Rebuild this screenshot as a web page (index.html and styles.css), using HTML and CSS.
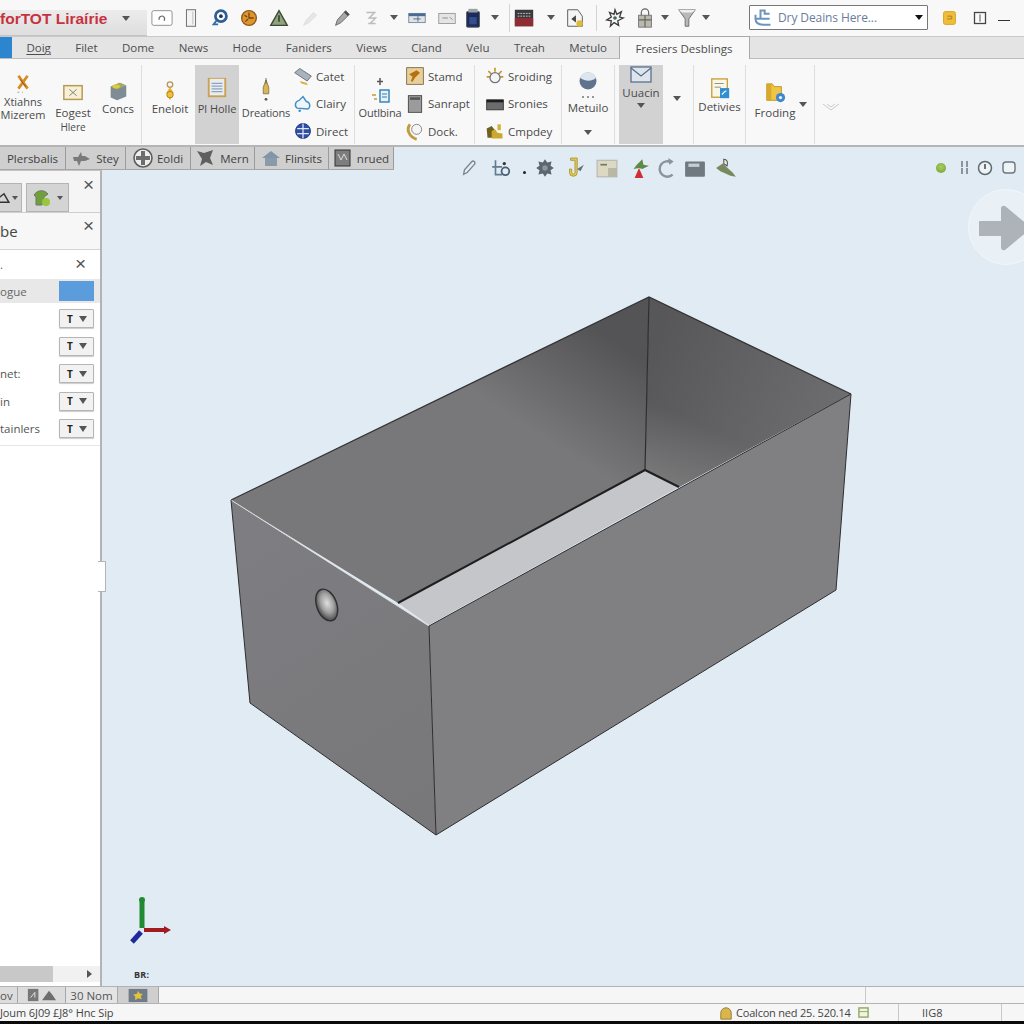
FILE: index.html
```html
<!DOCTYPE html>
<html lang="en">
<head>
<meta charset="utf-8">
<title>forTOT Liraírie</title>
<link rel="stylesheet" href="styles.css">
</head>
<body>
<header class="topbar">
  <div class="title"><span class="title-text">forTOT Liraírie</span><i class="tri tri-title"></i></div>
  <div class="slot w30"><svg class="i" viewBox="0 0 24 24"><rect x="1" y="4" width="22" height="16" rx="2" fill="#fff" stroke="#8a8a8a"/><path d="M9 14a3 3 0 1 1 5 1" fill="none" stroke="#666" stroke-width="1.2"/></svg></div>
  <div class="slot w28"><svg class="i" viewBox="0 0 24 24"><rect x="7" y="3" width="10" height="18" fill="#f4f4f4" stroke="#666"/><path d="M14 5v14" stroke="#bbb"/></svg></div>
  <div class="slot w30"><svg class="i" viewBox="0 0 24 24"><circle cx="13" cy="10" r="6" fill="none" stroke="#2f5d94" stroke-width="3"/><circle cx="13" cy="10" r="2" fill="#16385f"/><path d="M8 15l-3 4h5" fill="none" stroke="#2f6ea8" stroke-width="2"/></svg></div>
  <div class="slot w28"><svg class="i" viewBox="0 0 24 24"><circle cx="12" cy="12" r="8" fill="#e0952c" stroke="#8b5a1c" stroke-width="1.5"/><path d="M12 6v6h5M7 9l3 2M8 16l3-3" stroke="#6d4416" stroke-width="1.4" fill="none"/></svg></div>
  <div class="slot w32"><svg class="i" viewBox="0 0 24 24"><path d="M12 4l9 16H3z" fill="#8fa37c" stroke="#3c4a34" stroke-width="1.5"/><path d="M12 9v7" stroke="#2e3a28" stroke-width="1.6"/></svg></div>
  <div class="slot w30"><svg class="i" viewBox="0 0 24 24"><path d="M5 20l3-6 8-8 3 3-8 8z" fill="#e6e6e6" stroke="#ddd"/></svg></div>
  <div class="slot w34"><svg class="i" viewBox="0 0 24 24"><path d="M5 20l2-6 9-10 4 4-9 9z" fill="#a8a8a8" stroke="#666"/><path d="M15 5l4 4" stroke="#444" stroke-width="2"/></svg></div>
  <div class="slot w24"><svg class="i" viewBox="0 0 24 24"><path d="M7 6h9l-6 6h7l-6 6M9 18h8" fill="none" stroke="#bcbcbc" stroke-width="1.6"/></svg></div>
  <div class="slot w22"><i class="tri"></i></div>
  <div class="slot w24"><svg class="i" viewBox="0 0 24 24"><rect x="3" y="7" width="18" height="10" fill="#dfe3e8" stroke="#7a8796"/><rect x="3" y="7" width="18" height="3" fill="#4a6c92"/><path d="M13 10v6M8 13h8" stroke="#4d6a88"/></svg></div>
  <div class="slot w36"><svg class="i" viewBox="0 0 24 24"><rect x="3" y="7" width="18" height="11" fill="#e4e4e4" stroke="#999"/><path d="M7 12h6M15 11l3 3" stroke="#888"/></svg></div>
  <div class="slot w16"><svg class="i" viewBox="0 0 24 24"><rect x="5" y="5" width="14" height="17" rx="1" fill="#1b2a5a" stroke="#555"/><rect x="7" y="2" width="10" height="4" fill="#9aa0a8"/><rect x="8" y="11" width="8" height="8" fill="#33508c"/></svg></div>
  <div class="slot w28"><i class="tri"></i></div>
  <div class="slot w28 sep-left"><svg class="i" viewBox="0 0 24 24"><rect x="2" y="3" width="20" height="18" fill="#3a3a3e"/><rect x="2" y="12" width="20" height="9" fill="#8e2c33"/><path d="M5 7h14M5 10h14" stroke="#ccc" stroke-dasharray="2 1"/></svg></div>
  <div class="slot w28"><i class="tri"></i></div>
  <div class="slot w20"><svg class="i" viewBox="0 0 24 24"><path d="M4 3h11l5 7v11H4z" fill="#f5f5f5" stroke="#555"/><path d="M8 13l5-4v8z" fill="#444"/><circle cx="17" cy="18" r="3.5" fill="#e0b93a"/></svg></div>
  <div class="slot w22"><span class="bar-sep"></span></div>
  <div class="slot w16"><svg class="i" viewBox="0 0 24 24"><path d="M12 3l2 5 5-3-2 6 4 1-6 3 1 5-5-3-4 4 1-6-5-1 5-3-2-5 5 2z" fill="#f4f4f4" stroke="#3b3b3b" stroke-width="1.4"/><circle cx="12" cy="12" r="2" fill="#3a6c50"/></svg></div>
  <div class="slot w32 gap6"><svg class="i" viewBox="0 0 24 24"><rect x="5" y="9" width="14" height="13" fill="#b9b9ad" stroke="#777"/><path d="M8 9V6a4 4 0 0 1 8 0v3M12 9v13M5 14h14" fill="none" stroke="#666" stroke-width="1.3"/></svg></div>
  <div class="slot w8"><i class="tri"></i></div>
  <div class="slot w30 gap3"><svg class="i" viewBox="0 0 24 24"><path d="M3 3h18l-7 10v8h-4v-8z" fill="#b8b8b4" stroke="#6b6b6b"/><path d="M3 3h18l-3 3H6z" fill="#eee"/></svg></div>
  <div class="slot w8"><i class="tri"></i></div>
  <div class="search">
    <svg class="search-icon" viewBox="0 0 24 24"><path d="M3 8v5h6V3h5v4h6M3 13c0 5 4 7 9 7h9M9 13h11" fill="none" stroke="#6f94bc" stroke-width="2.4"/></svg>
    <span class="search-text">Dry Deains Here...</span>
    <i class="tri tri-black"></i>
  </div>
  <div class="slot w42"><svg class="i" viewBox="0 0 24 24"><rect x="6" y="5" width="13" height="14" rx="2" fill="#eebd3c" stroke="#d9a21e"/><path d="M10 10h5v3h-5" fill="none" stroke="#a8781a"/></svg></div>
  <div class="slot w19"><svg class="i" viewBox="0 0 24 24"><rect x="6" y="6" width="12" height="12" fill="#fafafa" stroke="#444" stroke-width="1.4"/><path d="M12 8v8" stroke="#444"/></svg></div>
  <div class="slot w35"><span class="minimise"></span></div>
</header>

<nav class="menu">
  <span class="menu-app"></span>
  <span class="menu-item first">Doig</span>
  <span class="menu-item">Filet</span>
  <span class="menu-item">Dome</span>
  <span class="menu-item">News</span>
  <span class="menu-item">Hode</span>
  <span class="menu-item">Faniders</span>
  <span class="menu-item">Views</span>
  <span class="menu-item">Cland</span>
  <span class="menu-item">Velu</span>
  <span class="menu-item">Treah</span>
  <span class="menu-item">Metulo</span>
  <span class="menu-item active">Fresiers Desblings</span>
</nav>

<section class="ribbon">
  <div class="group g1">
    <div class="rb rb-xt"><svg class="ri" viewBox="0 0 24 24"><path d="M7 3l10 14M17 3L7 17" stroke="#d98b22" stroke-width="3"/><path d="M9 7l6 8" stroke="#7a5520" stroke-width="1"/><path d="M6 21h2M11 21h1" stroke="#999"/></svg><span>Xtiahns<br>Mizerem</span></div>
    <div class="rb rb-eo"><svg class="ri" viewBox="0 0 24 24"><rect x="2" y="4" width="20" height="15" fill="#f7f0d4" stroke="#b59a55" stroke-width="1.6"/><path d="M8 8l8 7M16 8l-8 7" stroke="#777"/></svg><span>Eogest<br><small>Hlere</small></span></div>
    <div class="rb rb-co"><svg class="ri" viewBox="0 0 24 24"><path d="M4 7l10-4 7 3v12l-10 4-7-3z" fill="#7f8c96"/><path d="M4 7l10-4 7 3-10 4z" fill="#a7aa62"/><ellipse cx="10" cy="7" rx="4" ry="2.2" fill="#d8cf38"/></svg><span>Concs</span></div>
  </div>
  <div class="group g2">
    <div class="rb rb-en"><svg class="ri" viewBox="0 0 24 24"><circle cx="12" cy="5" r="3" fill="none" stroke="#b79554" stroke-width="1.4"/><path d="M12 8l-4 6 4 8 4-8z" fill="#e6ae2e"/><circle cx="12" cy="16" r="3.5" fill="#f0c23f" stroke="#b07d15"/></svg><span>Eneloit</span></div>
    <div class="rb rb-pl"><svg class="ri" viewBox="0 0 24 24"><rect x="2" y="1" width="20" height="21" fill="#c9a24e"/><rect x="4" y="2" width="16" height="18" fill="#e9edf2"/><path d="M6 7h12M6 10h12M6 13h12M6 16h12" stroke="#8ea4bd" stroke-width="1.4"/></svg><span>Pl Holle</span></div>
    <div class="rb rb-dr"><svg class="ri-tall" viewBox="0 0 24 30"><path d="M12 3l3 8v7H9v-7z" fill="#d8b45a" stroke="#8a7a48"/><path d="M12 1v6" stroke="#555"/><circle cx="12" cy="24" r="1.5" fill="#555"/></svg><span>Dreations</span></div>
    <div class="col">
      <div class="row"><svg class="si" viewBox="0 0 24 24"><path d="M2 8l6-5 14 9-5 6z" fill="#aab2bc" stroke="#5b6672"/><path d="M8 18l8 2 2 3-8-2z" fill="#d8b23c"/></svg><span>Catet</span></div>
      <div class="row"><svg class="si" viewBox="0 0 24 24"><path d="M5 17a5 5 0 0 1 2-9l5-5 4 6a5 5 0 0 1 2 9z" fill="#eef6fb" stroke="#3f8fc2" stroke-width="1.7"/><circle cx="8" cy="20" r="1.5" fill="#3f8fc2"/></svg><span>Clairy</span></div>
      <div class="row"><svg class="si" viewBox="0 0 24 24"><circle cx="12" cy="12" r="9" fill="#2f4fa6" stroke="#1d2f73"/><path d="M5 9h14M5 15h14M12 3v18" stroke="#dfe8fa" stroke-width="1.5"/></svg><span>Direct</span></div>
    </div>
  </div>
  <div class="group g3">
    <div class="rb rb-ou"><svg class="ri-ou" viewBox="0 0 24 32"><path d="M12 4v7M9 7.500h6" stroke="#555" stroke-width="1.500"/><rect x="12" y="16" width="9" height="12" fill="#e7f1f8" stroke="#2c7fb8" stroke-width="1.400"/><path d="M14 20h5M14 23h5" stroke="#2c7fb8"/><path d="M4 21h4M6 25h3" stroke="#c59a3b" stroke-width="1.600"/></svg><span>Outlbina</span></div>
    <div class="col">
      <div class="row"><svg class="si" viewBox="0 0 24 24"><rect x="2" y="2" width="20" height="20" fill="#e6cf9a" stroke="#77603a"/><path d="M5 10l9-5 4 3-6 6-3 5-2-1 2-5z" fill="#b8700f"/></svg><span>Stamd</span></div>
      <div class="row"><svg class="si" viewBox="0 0 24 24"><rect x="4" y="2" width="16" height="20" fill="#9b9b9b" stroke="#3d3d3d"/><rect x="6" y="4" width="12" height="3" fill="#555"/></svg><span>Sanrapt</span></div>
      <div class="row"><svg class="si" viewBox="0 0 24 24"><path d="M6 4C1 10 5 19 14 22" fill="none" stroke="#c29a40" stroke-width="3.500"/><circle cx="14" cy="10" r="6" fill="#f5f5f5" stroke="#777"/></svg><span>Dock.</span></div>
    </div>
  </div>
  <div class="group g4">
    <div class="col">
      <div class="row"><svg class="si" viewBox="0 0 24 24"><path d="M12 2v5M4 6l4 4M20 6l-4 4M2 13h5M22 13h-5" stroke="#c8962a" stroke-width="2"/><circle cx="12" cy="14" r="6" fill="#f4f4f4" stroke="#6d7680" stroke-width="1.500"/></svg><span>Sroiding</span></div>
      <div class="row"><svg class="si" viewBox="0 0 24 24"><rect x="2" y="7" width="20" height="12" fill="#6c6c6c" stroke="#2f2f2f"/><rect x="2" y="7" width="20" height="3" fill="#1e1e1e"/></svg><span>Sronies</span></div>
      <div class="row"><svg class="si" viewBox="0 0 24 24"><path d="M2 9l6-3 3 4v10H3z" fill="#6f6220"/><path d="M8 12l4-2 3 4 6 1v6H8z" fill="#cba92c"/><path d="M15 4h4v7h-4z" fill="#d0b23a"/></svg><span>Cmpdey</span></div>
    </div>
  </div>
  <div class="group g5">
    <div class="rb rb-me"><svg class="ri-me" viewBox="0 0 24 30"><circle cx="12" cy="10" r="8.500" fill="#5f748c"/><path d="M4 7a8.500 8.500 0 0 1 16 0c-5 4-11 3-16 0z" fill="#dde6ee"/><path d="M6 26h2M11 26h2M16 26h2" stroke="#777" stroke-width="1.500"/></svg><span>Metuilo</span><i class="tri tri-me"></i></div>
  </div>
  <div class="group g6">
    <div class="rb rb-ua"><svg class="ri-en" viewBox="0 0 24 18"><rect x="2" y="1" width="20" height="15" fill="#dfe5ec" stroke="#59708c" stroke-width="1.300"/><path d="M2 2l10 8 10-8" fill="none" stroke="#59708c" stroke-width="1.300"/></svg><span>Uuacin</span><i class="tri tri-ua"></i></div>
    <i class="tri tri-side"></i>
  </div>
  <div class="group g7">
    <div class="rb rb-de"><svg class="ri" viewBox="0 0 24 24"><rect x="3" y="1" width="17" height="20" fill="#fbf7e6" stroke="#c9a13e" stroke-width="1.500"/><path d="M6 6h10M6 10h7" stroke="#888"/><rect x="12" y="11" width="10" height="11" fill="#2f8fd0"/><path d="M14 18l3-3 2-1" stroke="#e7f3fb" stroke-width="1.500" fill="none"/></svg><span>Detivies</span></div>
  </div>
  <div class="group g8">
    <div class="rb rb-fr"><svg class="ri" viewBox="0 0 24 24"><path d="M3 2h6l2 3h8v15H3z" fill="#eec545" stroke="#c0962b"/><rect x="3" y="2" width="5" height="18" fill="#d9a92c"/><circle cx="18" cy="17" r="5" fill="#3f87cc"/><circle cx="18" cy="17" r="1.800" fill="#e6f2fb"/></svg><span>Froding</span></div>
    <i class="tri tri-fr"></i>
  </div>
  <svg class="collapse" viewBox="0 0 18 8"><path d="M1 1l8 6 8-6M5 1l4 3 4-3" fill="none" stroke="#c9c9c9"/></svg>
</section>

<main class="workspace">
  <svg class="model" viewBox="0 147 1024 839">
    <defs>
      <linearGradient id="wallLeft" gradientUnits="userSpaceOnUse" x1="555" y1="445" x2="620" y2="345">
        <stop offset="0" stop-color="#78787b"/><stop offset="1" stop-color="#545456"/>
      </linearGradient>
      <linearGradient id="wallRight" gradientUnits="userSpaceOnUse" x1="650" y1="350" x2="830" y2="430">
        <stop offset="0" stop-color="#575759"/><stop offset="1" stop-color="#6d6d6f"/>
      </linearGradient>
      <linearGradient id="wallRightFade" gradientUnits="userSpaceOnUse" x1="690" y1="420" x2="665" y2="478">
        <stop offset="0" stop-color="#7a7a7b" stop-opacity="0"/><stop offset="1" stop-color="#7a7a7b" stop-opacity="0.9"/>
      </linearGradient>
      <linearGradient id="faceLeft" gradientUnits="userSpaceOnUse" x1="240" y1="520" x2="420" y2="800">
        <stop offset="0" stop-color="#7e7e82"/><stop offset="1" stop-color="#78787b"/>
      </linearGradient>
      <radialGradient id="hole" cx="0.55" cy="0.45" r="0.55">
        <stop offset="0" stop-color="#dedede"/><stop offset="0.55" stop-color="#a0a0a0"/><stop offset="1" stop-color="#4c4c4e"/>
      </radialGradient>
    </defs>
    <polygon points="231,500 649,297 645,470 398,603" fill="url(#wallLeft)"/>
    <polygon points="649,297 851,394 679,487 645,470" fill="url(#wallRight)"/>
    <polygon points="649,297 851,394 679,487 645,470" fill="url(#wallRightFade)"/>
    <polygon points="398,603 645,470 679,487 429,625" fill="#c5c6ca"/>
    <polygon points="429,626 851,394 836,590 436,835" fill="#808082"/>
    <polygon points="231,500 429,626 436,835 250,703" fill="url(#faceLeft)"/>
    <path d="M649,297 L645,470" stroke="#2e2e30" stroke-width="1.200" fill="none"/>
    <path d="M398,603 L645,470 L679,487" stroke="#1f1f21" stroke-width="2" fill="none"/>
    <path d="M231,500 L649,297 L851,394" stroke="#333336" stroke-width="1.200" fill="none"/>
    <path d="M231,500 L429,626" stroke="#dcdcde" stroke-width="1" fill="none"/>
    <path d="M429,626 L851,394 L836,590 L436,835 L250,703 L231,500 M429,626 L436,835" stroke="#2e2e31" stroke-width="1" fill="none"/>
    <ellipse cx="326.700" cy="605" rx="10" ry="16.500" transform="rotate(-20 326.700 605)" fill="url(#hole)" stroke="#2f2f31" stroke-width="1.400"/>
    <path d="M142 928V902" stroke="#1f8a32" stroke-width="5"/>
    <circle cx="142" cy="900" r="3" fill="#1f8a32"/>
    <path d="M144 930h21" stroke="#a01c1e" stroke-width="4"/>
    <path d="M164 926l7 4-7 4z" fill="#a01c1e"/>
    <path d="M141 932l-9 10" stroke="#1e2a9a" stroke-width="5"/>
  </svg>

  <div class="cmdbar">
    <div class="cmdtabs">
      <span class="cmd cmd-a">Plersbalis</span>
      <span class="cmd cmd-b"><svg class="ci" viewBox="0 0 20 20"><path d="M1 9h5l3-5 1 4h3l5 3-5 2h-4l-2 5-2-5H2z" fill="#7a7a7a"/></svg>Stey</span>
      <span class="cmd cmd-c"><svg class="ci" viewBox="0 0 20 20"><circle cx="10" cy="10" r="9" fill="#eee" stroke="#5d5d5d" stroke-width="1.600"/><path d="M10 3v14M3 10h14" stroke="#6d6d6d" stroke-width="4"/></svg>Eoldi</span>
      <span class="cmd cmd-d"><svg class="ci" viewBox="0 0 20 20"><path d="M1 3l7 2 9-3-3 8 3 7-7-3-6 4 2-7z" fill="#5f5f5f"/></svg>Mern</span>
      <span class="cmd cmd-e"><svg class="ci" viewBox="0 0 20 20"><path d="M1 10l9-7 9 7z" fill="#7f95a8"/><rect x="4" y="10" width="12" height="8" fill="#8a9aa8"/></svg>Flinsits</span>
      <span class="cmd cmd-f"><svg class="ci" viewBox="0 0 20 20"><rect x="2" y="2" width="15" height="16" fill="#7d7d7d" stroke="#333"/><path d="M5 6l3 6 3-6 3 6" fill="none" stroke="#ddd"/></svg>nrued</span>
    </div>
    <div class="viewtools">
      <svg class="vi v1" viewBox="0 0 20 20"><path d="M4 17l1-5 8-9a2 2 0 0 1 3 3l-8 9z" fill="#e7edf2" stroke="#7d848b" stroke-width="1.500"/></svg>
      <svg class="vi v2" viewBox="0 0 20 20"><path d="M5 3v13h6M2 9h9" stroke="#5f7c96" stroke-width="1.500" fill="none"/><circle cx="14" cy="13" r="3.500" fill="none" stroke="#4a5d70" stroke-width="1.600"/><circle cx="13" cy="6" r="1.500" fill="#333"/></svg>
      <span class="vdot"></span>
      <svg class="vi v3" viewBox="0 0 20 20"><path d="M10 2l2 3 4-1-1 4 3 2-3 2 1 4-4-1-2 3-2-3-4 1 1-4-3-2 3-2-1-4 4 1z" fill="#5a6670"/><circle cx="10" cy="10" r="2.500" fill="#8b959c"/></svg>
      <svg class="vi v4" viewBox="0 0 20 20"><path d="M6 1h6v13a3.500 3.500 0 0 1-7 0v-3h2v3a1.500 1.500 0 0 0 3 0V3H6z" fill="#e4cf5c" stroke="#a8912f" stroke-width=".8"/><path d="M12 11l6-4-3 6z" fill="#67707a"/></svg>
      <svg class="vi v5" viewBox="0 0 20 20"><rect x="1" y="3" width="18" height="15" fill="#dcd8c2" stroke="#b5b5b5"/><path d="M4 7h6" stroke="#6d7a5e" stroke-width="1.500"/><rect x="11" y="10" width="8" height="8" fill="#b9b7a5"/></svg>
      <svg class="vi v6" viewBox="0 0 20 20"><path d="M2 4l6 3 5-5 1 5 5 1-6 3-3-1-5 1 3-4z" fill="#5d8a46"/><path d="M6 19l4-9 4 9z" fill="#cf2e34"/></svg>
      <svg class="vi v7" viewBox="0 0 20 20"><path d="M15 5a7 7 0 1 0 1 11" fill="none" stroke="#89949e" stroke-width="2.200"/><path d="M12 1l5 3-4 3z" fill="#89949e"/></svg>
      <svg class="vi v8" viewBox="0 0 20 20"><rect x="1" y="4" width="18" height="14" rx="1" fill="#707880"/><rect x="4" y="6" width="10" height="3" fill="#c6ccd1"/></svg>
      <svg class="vi v9" viewBox="0 0 20 20"><path d="M1 10l6-4 9 8 3 4-5-1-9-4z" fill="#79895f"/><path d="M8 2c3 0 4 3 3 6L8 6z" fill="#f1f1e8" stroke="#555"/></svg>
    </div>
    <div class="viewright">
      <span class="status-dot"></span>
      <svg class="vr vr1" viewBox="0 0 14 16"><path d="M4 1v14M9 1v14" stroke="#8c959b" stroke-width="2" stroke-dasharray="6 1"/></svg>
      <svg class="vr vr2" viewBox="0 0 16 16"><circle cx="8" cy="8" r="6.500" fill="#eef3f6" stroke="#5f6a72" stroke-width="1.500"/><path d="M8 4v5" stroke="#444" stroke-width="1.500"/></svg>
      <svg class="vr vr3" viewBox="0 0 16 16"><rect x="2" y="2" width="12" height="11" rx="3" fill="#eef3f6" stroke="#6d767d" stroke-width="1.400"/></svg>
    </div>
  </div>

  <div class="stage">
    <aside class="panel">
      <div class="p-tools">
        <span class="p-btn p-btn-a"><svg class="pi" viewBox="0 0 20 20"><path d="M10 3l8 14H-8z" fill="none" stroke="#333" stroke-width="2.400"/></svg><i class="tri tri-small"></i></span>
        <span class="p-btn p-btn-b"><svg class="pi" viewBox="0 0 20 20"><path d="M2 7c3-5 10-6 14-1l-4 3-2 8H4V9z" fill="#6fa03c" stroke="#6c7868"/><circle cx="14" cy="14" r="4" fill="#9ac53f"/></svg><i class="tri tri-small"></i></span>
        <span class="close c1">×</span>
      </div>
      <div class="p-head"><span>be</span><span class="close c2">×</span></div>
      <div class="p-sub"><span>.</span><span class="close c3">×</span></div>
      <div class="p-row p-row-sel"><span>ogue</span><span class="swatch"></span></div>
      <div class="p-row"><span></span><span class="drop"><b>T</b><i class="tri"></i></span></div>
      <div class="p-row"><span></span><span class="drop"><b>T</b><i class="tri"></i></span></div>
      <div class="p-row"><span>net:</span><span class="drop"><b>T</b><i class="tri"></i></span></div>
      <div class="p-row"><span>in</span><span class="drop"><b>T</b><i class="tri"></i></span></div>
      <div class="p-row"><span>tainlers</span><span class="drop"><b>T</b><i class="tri"></i></span></div>
      <div class="p-spacer"></div>
      <div class="p-scroll"><span class="thumb"></span><i class="tri-right"></i></div>
      <span class="handle"></span>
    </aside>
    <span class="axis-label">BR:</span>
    <div class="nav-circle"><svg class="nav-arrow" viewBox="0 0 50 46"><path d="M2 16h20V3a3 3 0 0 1 4-2l24 20v4L26 45a3 3 0 0 1-4-2V31H2a7 7 0 0 1 0-15z" fill="#aeb3b9"/></svg></div>
  </div>
</main>

<footer class="footer">
  <div class="status-a">
    <span class="sa sa-ov">ov</span>
    <span class="sa sa-ic"><svg class="sti" viewBox="0 0 16 16"><rect x="1" y="1" width="12" height="14" fill="#777"/><path d="M4 11l5-6v6" stroke="#eee" fill="none"/></svg><svg class="sti" viewBox="0 0 16 16"><path d="M0 14l8-11 4 5 4 6z" fill="#6d6d6d"/></svg></span>
    <span class="sa sa-nm">30 Nom</span>
    <span class="sa sa-ic2"><svg class="sti2" viewBox="0 0 22 16"><rect x="1" y="1" width="20" height="14" fill="#6f7b88"/><path d="M11 3l2 3 3 0-2 3 1 3-4-1-3 2 0-4-2-2 4-1z" fill="#e3c23c"/></svg></span>
    <span class="sa-rest"></span>
  </div>
  <div class="status-b">
    <span class="sb-left">Joum 6J09 £J8° Hnc Sip</span>
    <span class="sb-info"><svg class="sti" viewBox="0 0 16 16"><path d="M2 15V8a6 6 0 0 1 12 0v7z" fill="#d9b54a" stroke="#8f7a3a"/></svg>Coalcon ned 25. 520.14<svg class="sti-g" viewBox="0 0 12 12"><rect x="1" y="1" width="10" height="10" fill="#f0f4e2" stroke="#8fa860" stroke-width="1.500"/><path d="M1 5h10" stroke="#8fa860"/></svg></span>
    <span class="sb-mode">IIG8</span>
    <span class="sb-end"></span>
  </div>
  <div class="blackbar"></div>
</footer>
</body>
</html>
```

FILE: styles.css
```css
* { box-sizing: border-box; }
html, body { margin: 0; height: 100%; }
body {
  width: 1024px; height: 1024px; overflow: hidden;
  display: flex; flex-direction: column;
  font-family: "Open Sans", "Liberation Sans", sans-serif;
  font-size: 11.500px; color: #4a4a4a; background: #f7f7f7;
}
i { display: block; font-style: normal; }
svg { display: block; flex: none; }

.tri { width: 0; height: 0; border-left: 4px solid transparent; border-right: 4px solid transparent; border-top: 5px solid #555; }

/* top bar */
.topbar { height: 36px; flex: none; display: flex; align-items: center; background: #f8f8f8; overflow: hidden; }
.title { width: 147px; height: 26px; margin-top: 10px; align-self: flex-start; background: linear-gradient(#ececec, #dedede); display: flex; align-items: flex-start; flex: none; border-bottom: 1px solid #c4c4c4; }
.title-text { width: 122px; line-height: 18px; font-size: 15.500px; font-weight: 600; color: #c8323f; white-space: nowrap; font-family: "Liberation Sans", sans-serif; }
.tri-title { margin-top: 6px; }
.slot { height: 28px; margin-top: -1px; flex: none; display: flex; align-items: center; justify-content: center; }
.w8 { width: 8px; } .w16 { width: 16px; } .w19 { width: 19px; } .w20 { width: 20px; } .w22 { width: 22px; }
.w24 { width: 24px; } .w28 { width: 28px; } .w30 { width: 30px; } .w32 { width: 32px; } .w34 { width: 34px; }
.w35 { width: 35px; } .w36 { width: 36px; } .w42 { width: 42px; }
.gap6 { margin-left: 6px; } .gap3 { margin-left: 3px; }
.i { width: 22px; height: 22px; }
.sep-left { border-left: 1px solid #d4d4d4; }
.bar-sep { width: 1px; height: 26px; background: #d4d4d4; }
.search { width: 179px; height: 25px; margin: -1px 0 0 39px; flex: none; display: flex; align-items: center; background: #fff; border: 1px solid #77787a; border-radius: 1px; }
.search-icon { width: 22px; height: 20px; margin-left: 2px; }
.search-text { flex: 1; margin-left: 4px; color: #6a7c9c; font-size: 12px; letter-spacing: -.1px; white-space: nowrap; }
.tri-black { border-top-color: #111; margin-right: 4px; border-left-width: 4.5px; border-right-width: 4.5px; }
.minimise { width: 12px; height: 1.500px; margin-right: 6px; margin-top: 6px; background: #333; }

/* menu */
.menu { height: 23px; flex: none; display: flex; align-items: center; gap: 24.400px; background: #e4e4e4; border-top: 1px solid #c9c9c9; border-bottom: 1px solid #bdbdbd; }
.menu-app { width: 12px; height: 100%; background: #2b86cf; }
.menu-item { white-space: nowrap; color: #4c4c4c; }
.menu-item.first { margin-left: -10px; text-decoration: underline; text-underline-offset: 2px; }
.menu-item.active { margin-left: -12px; height: 24px; margin-top: 1px; padding: 2px 0 0 15px; line-height: 19px; background: #f8f8f8; border: 1px solid #a9a9a9; border-bottom: 0; width: 131px; }

/* ribbon */
.ribbon { height: 88px; flex: none; display: flex; align-items: flex-start; background: #f8f8f8; border-bottom: 2px solid #b5b5b5; padding-top: 6px; overflow: hidden; }
.group { height: 79px; display: flex; align-items: flex-start; flex: none; border-right: 1px solid #dedede; }
.g1 { width: 142px; } .g2 { width: 213px; } .g3 { width: 120px; } .g4 { width: 87px; padding-left: 10px; }
.g5 { width: 53px; } .g6 { width: 79px; padding-left: 4px; } .g7 { width: 52px; } .g8 { width: 69px; padding-left: 9px; }
.rb { display: flex; flex-direction: column; align-items: center; text-align: center; line-height: 13px; flex: none; white-space: nowrap; }
.rb small { font-size: 10px; }
.ri { width: 22px; height: 22px; }
.ri-tall { width: 22px; height: 30px; }
.ri-ou { width: 24px; height: 32px; }
.ri-me { width: 24px; height: 30px; }
.ri-en { width: 24px; height: 18px; margin-bottom: 2px; }
.rb-xt { width: 46px; padding-top: 8px; font-size: 11px; }
.rb-eo { width: 46px; margin-left: 4px; padding-top: 17px; line-height: 14px; }
.rb-eo .ri { margin-bottom: 2px; }
.rb-co { width: 40px; margin-left: 2px; padding-top: 15px; }
.rb-en { width: 50px; margin-left: 3px; padding-top: 15px; }
.rb-pl { width: 44px; height: 79px; padding-top: 12px; background: #d2d2d2; font-size: 11px; }
.rb-pl .ri { margin-bottom: 3px; }
.rb-dr { width: 54px; padding-top: 11px; font-size: 11px; letter-spacing: -.2px; }
.col { display: flex; flex-direction: column; gap: 5.500px; }
.row { height: 22px; display: flex; align-items: center; gap: 3px; white-space: nowrap; }
.si { width: 20px; height: 20px; }
.rb-ou { width: 50px; padding-top: 9px; font-size: 11px; letter-spacing: -.2px; }
.rb-me { width: 52px; padding-top: 6px; }
.tri-me { margin-top: 16px; }
.rb-ua { width: 44px; height: 79px; padding-top: 1px; background: #d2d2d2; }
.tri-ua { margin-top: 4px; }
.tri-side { margin: 31px 0 0 10px; }
.rb-de { width: 51px; padding-top: 13px; }
.rb-fr { width: 40px; padding-top: 17px; }
.rb-fr .ri { margin-bottom: 2px; }
.tri-fr { margin: 37px 0 0 4px; }
.collapse { width: 18px; height: 8px; margin: 38px 0 0 7px; }

/* workspace */
.workspace { flex: 1; min-height: 0; position: relative; display: flex; flex-direction: column; background: #e0ebf3; }
.model { position: absolute; inset: 0; width: 1024px; height: 839px; }
.cmdbar { position: relative; height: 23px; flex: none; display: flex; align-items: flex-start; }
.cmdtabs { width: 394px; height: 23px; flex: none; display: flex; background: #cfcfcf; border-bottom: 1px solid #a6a6a6; }
.cmd { height: 22px; display: flex; align-items: center; justify-content: center; gap: 4px; border-right: 1px solid #9b9b9b; color: #3f3f3f; white-space: nowrap; flex: none; }
.cmd-a { width: 66px; } .cmd-b { width: 60px; } .cmd-c { width: 65px; } .cmd-d { width: 64px; } .cmd-e { width: 74px; } .cmd-f { width: 65px; }
.ci { width: 20px; height: 20px; }
.viewtools { position: relative; display: flex; align-items: center; height: 42px; }
.vi { width: 22px; height: 22px; }
.v1 { margin-left: 66px; width: 18px; height: 18px; } .v2 { margin-left: 12px; } .v3 { margin-left: 8px; } .v4 { margin-left: 8px; }
.v5 { margin-left: 10px; } .v6 { margin-left: 10px; } .v7 { margin-left: 5px; } .v8 { margin-left: 7px; } .v9 { margin-left: 9px; }
.vdot { width: 3px; height: 3px; border-radius: 50%; background: #222; margin: 8px 0 0 11px; }
.viewright { position: relative; margin-left: auto; height: 42px; display: flex; align-items: center; padding-right: 7px; }
.status-dot { width: 10px; height: 10px; border-radius: 50%; background: radial-gradient(circle at 50% 40%, #a9d060, #6d9f2d); margin-right: 11px; }
.vr { width: 16px; height: 16px; }
.vr2 { margin-left: 4px; }
.vr3 { margin-left: 8px; }
.stage { position: relative; flex: 1; min-height: 0; display: flex; }

/* panel */
.panel { position: relative; width: 102px; height: 816px; display: flex; flex-direction: column; background: #fff; border-right: 2px solid #b4b4b4; border-top: 1px solid #c4c4c4; color: #555; }
.p-tools { position: relative; height: 42px; flex: none; display: flex; align-items: flex-start; gap: 4px; padding-top: 12px; background: #f5f5f5; border-bottom: 1px solid #cfcfcf; }
.p-btn { height: 29px; display: flex; align-items: center; justify-content: center; gap: 5px; background: #d4d4d4; border: 1px solid #b4b4b4; }
.p-btn-a { width: 22px; border-left: 0; justify-content: flex-end; padding-right: 3px; }
.p-btn-b { width: 43px; }
.pi { width: 20px; height: 20px; }
.p-btn-a .pi { margin-right: -3px; width: 12px; }
.tri-small { border-left-width: 3px; border-right-width: 3px; border-top-width: 4px; }
.close { position: absolute; font-size: 19px; line-height: 16px; color: #555; font-family: "Liberation Sans", sans-serif; }
.c1 { right: 6px; top: 6px; }
.c2 { right: 6px; top: 5px; }
.c3 { right: 14px; top: 6px; }
.p-head { position: relative; height: 37px; flex: none; display: flex; align-items: center; font-size: 15px; background: #f7f7f7; border-bottom: 1px solid #d4d4d4; color: #444; }
.p-sub { position: relative; height: 29px; flex: none; display: flex; align-items: center; }
.p-row { height: 27.500px; flex: none; padding-right: 6px; display: flex; align-items: center; justify-content: space-between; font-size: 11.500px; white-space: nowrap; }
.p-row-sel { height: 24px; background: #e8e8e8; color: #666; margin-bottom: 2px; }
.swatch { width: 35px; height: 20px; background: #5b9cdc; }
.drop { width: 35px; height: 19px; display: flex; align-items: center; justify-content: space-between; padding: 0 6px 0 7px; background: #f2f2f2; border: 1px solid #b5b5b5; border-radius: 1px; box-shadow: 0 1px 1px #ccc; flex: none; }
.drop b { font-size: 10px; color: #222; }
.drop .tri { border-left-width: 4px; border-right-width: 4px; border-top-width: 6px; }
.p-spacer { flex: 1; margin-top: 2px; border-top: 1px solid #e6e6e6; }
.p-scroll { height: 16px; margin-bottom: 4px; flex: none; display: flex; align-items: center; background: #f1f1f1; }
.thumb { width: 53px; height: 16px; background: #c8c8c8; }
.tri-right { width: 0; height: 0; margin-left: 34px; border-top: 4px solid transparent; border-bottom: 4px solid transparent; border-left: 5px solid #555; }
.handle { position: absolute; left: 98px; top: 390px; width: 8px; height: 31px; background: #fff; border: 1px solid #b4b4b4; border-left: 0; }
.axis-label { position: absolute; left: 134px; top: 800px; font-size: 9px; font-weight: 700; line-height: 10px; color: #333; letter-spacing: .2px; }
.nav-circle { position: absolute; left: 968px; top: 19px; width: 76px; height: 76px; border-radius: 50%; background: #e9f1f6; border: 1px solid #f2f6f9; overflow: hidden; }
.nav-arrow { width: 50px; height: 46px; margin: 15px 0 0 10px; }

/* footer */
.footer { flex: none; height: 38px; display: flex; flex-direction: column; background: #f6f6f6; }
.status-a { height: 18px; flex: none; display: flex; align-items: stretch; border-top: 1px solid #b3b3b3; border-bottom: 1px solid #b3b3b3; }
.sa { display: flex; align-items: center; justify-content: center; background: #dcdcdc; border-right: 1px solid #a8a8a8; color: #555; white-space: nowrap; flex: none; }
.sa-ov { width: 18px; justify-content: flex-start; }
.sa-ic { width: 48px; gap: 1px; }
.sa-ic2 { width: 41px; background: #cfcfcf; }
.sa-nm { width: 52px; background: #e4e4e4; }
.sa-rest { flex: 1; background: linear-gradient(to right, #f6f6f6 706px, #c9c9c9 706px, #c9c9c9 707px, #f6f6f6 707px); }
.sti { width: 14px; height: 14px; }
.sti2 { width: 22px; height: 15px; }
.status-b { height: 17px; flex: none; display: flex; align-items: center; white-space: nowrap; font-size: 11px; color: #444; }
.sb-left { margin-right: auto; letter-spacing: -.1px; }
.sb-info { height: 17px; width: 180px; display: flex; align-items: center; gap: 3px; border-right: 1px solid #c9c9c9; letter-spacing: -.2px; }
.sti-g { width: 11px; height: 11px; margin-left: 4px; }
.sb-mode { width: 103px; height: 17px; line-height: 17px; padding-left: 23px; border-right: 1px solid #c9c9c9; }
.sb-end { width: 22px; }
.blackbar { height: 3px; flex: none; background: #0a0a0a; }
```
